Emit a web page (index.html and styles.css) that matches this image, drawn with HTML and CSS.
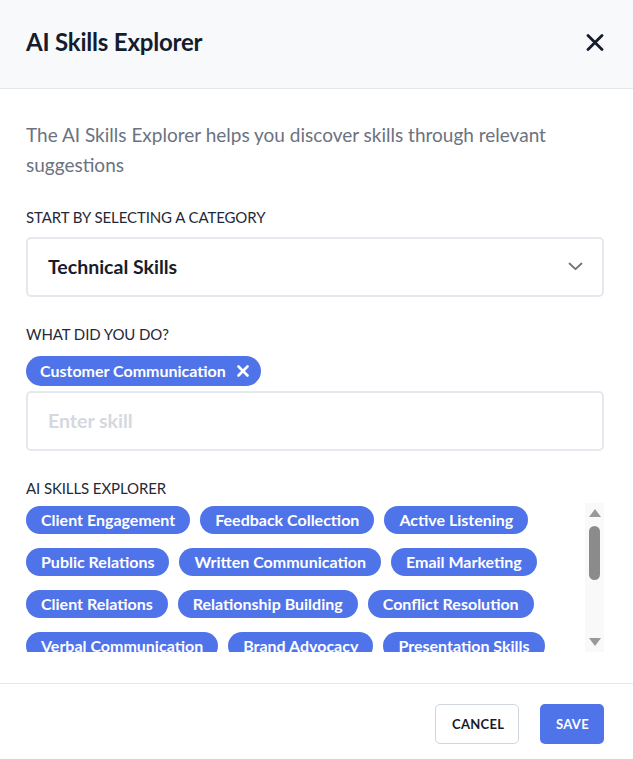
FILE: index.html
```html
<!DOCTYPE html>
<html lang="en">
<head>
<meta charset="utf-8">
<title>AI Skills Explorer</title>
<link rel="stylesheet" href="styles.css">
</head>
<body>
<div class="modal">
  <header class="modal-header">
    <h1 class="modal-title">AI Skills Explorer</h1>
    <button class="close-btn" aria-label="Close">
      <svg width="18" height="17" viewBox="0 0 18 17"><path d="M2 1.5 L16 15.5 M16 1.5 L2 15.5" stroke="#141b2d" stroke-width="2.8" stroke-linecap="round" fill="none"/></svg>
    </button>
  </header>
  <main class="modal-body">
    <p class="intro">The AI Skills Explorer helps you discover skills through relevant suggestions</p>

    <div class="label label-first">START BY SELECTING A CATEGORY</div>
    <div class="select">
      <span class="select-value">Technical Skills</span>
      <svg class="chevron" width="15" height="9" viewBox="0 0 15 9"><path d="M1.5 1.5 L7.5 7.2 L13.5 1.5" stroke="#6b7280" stroke-width="1.8" fill="none" stroke-linecap="round" stroke-linejoin="round"/></svg>
    </div>

    <div class="label">WHAT DID YOU DO?</div>
    <div class="selected-row">
      <span class="chip chip-selected">Customer Communication
        <svg class="chip-x" width="12" height="12" viewBox="0 0 12 12"><path d="M1.5 1.5 L10.5 10.5 M10.5 1.5 L1.5 10.5" stroke="#ffffff" stroke-width="2.6" stroke-linecap="round" fill="none"/></svg>
      </span>
    </div>
    <div class="input"><span class="placeholder">Enter skill</span></div>

    <div class="label">AI SKILLS EXPLORER</div>
    <div class="explorer">
      <div class="chip-list">
        <span class="chip">Client Engagement</span>
        <span class="chip">Feedback Collection</span>
        <span class="chip">Active Listening</span>
        <span class="chip">Public Relations</span>
        <span class="chip">Written Communication</span>
        <span class="chip">Email Marketing</span>
        <span class="chip">Client Relations</span>
        <span class="chip">Relationship Building</span>
        <span class="chip">Conflict Resolution</span>
        <span class="chip">Verbal Communication</span>
        <span class="chip">Brand Advocacy</span>
        <span class="chip">Presentation Skills</span>
        <span class="chip">Customer Support</span>
        <span class="chip">Negotiation</span>
        <span class="chip">Social Media</span>
      </div>
      <div class="scrollbar">
        <span class="arrow-up"></span>
        <span class="thumb"></span>
        <span class="track-space"></span>
        <span class="arrow-down"></span>
      </div>
    </div>
  </main>
  <footer class="modal-footer">
    <button class="btn btn-cancel">CANCEL</button>
    <button class="btn btn-save">SAVE</button>
  </footer>
</div>
</body>
</html>
```
FILE: styles.css
```css
* { box-sizing: border-box; }
html, body { margin: 0; padding: 0; background: #ffffff; }
body {
  font-family: "Lato", "Liberation Sans", sans-serif;
  color: #1f2937;
  width: 633px;
  height: 759px;
  overflow: hidden;
}
.modal { display: flex; flex-direction: column; height: 759px; }

.modal-header {
  height: 89px;
  background: #f8f9fb;
  border-bottom: 1px solid #e5e7eb;
  display: flex;
  align-items: center;
  justify-content: space-between;
  padding: 0 29px 6px 26px;
}
.modal-title {
  margin: 0;
  font-size: 24px;
  font-weight: 700;
  color: #151c2c;
  letter-spacing: -0.2px;
}
.close-btn {
  border: 0; background: none; padding: 0; margin: 0 0 -2px;
  display: flex; width: 18px; height: 17px;
}

.modal-body { padding: 31px 29px 0 26px; }
.intro {
  margin: 0;
  font-size: 19px;
  line-height: 30px;
  color: #6b7280;
  width: 560px;
}
.label {
  font-size: 15px;
  line-height: 20px;
  color: #1f2937;
  margin-top: 27px;
  letter-spacing: -0.1px;
}
.label-first { margin-top: 27px; }

.select {
  margin-top: 10px;
  height: 60px;
  border: 2px solid #e5e8ee;
  border-radius: 5px;
  display: flex;
  align-items: center;
  justify-content: space-between;
  padding: 0 19px 1px 20px;
}
.select-value { font-size: 19.5px; font-weight: 700; color: #161d2b; }
.chevron { display: block; }

.selected-row { margin-top: 12px; display: flex; }
.chip {
  display: inline-flex;
  align-items: center;
  height: 28px;
  padding: 0 15px 1px;
  border-radius: 14px;
  background: #4f73e9;
  color: #ffffff;
  font-size: 16px;
  font-weight: 700;
  white-space: nowrap;
}
.chip-selected { height: 30px; border-radius: 15px; padding: 0 12px 1px 14px; gap: 11px; }
.chip-x { display: block; }

.input {
  margin-top: 5px;
  height: 60px;
  border: 2px solid #e5e8ee;
  border-radius: 5px;
  display: flex;
  align-items: center;
  padding: 0 20px 1px;
}
.placeholder { font-size: 19.5px; font-weight: 700; color: #d5d8de; }

.explorer {
  margin-top: 5px;
  height: 149px;
  display: flex;
  gap: 10px;
}
.chip-list {
  flex: 1;
  overflow: hidden;
  display: flex;
  flex-wrap: wrap;
  align-content: flex-start;
  column-gap: 10px;
  row-gap: 14px;
  padding-top: 3px;
}
.scrollbar {
  width: 19px;
  flex: none;
  background: #f9f9f9;
  display: flex;
  flex-direction: column;
  align-items: center;
  padding: 6px 0 6px;
}
.arrow-up {
  width: 0; height: 0;
  border-left: 6px solid transparent;
  border-right: 6px solid transparent;
  border-bottom: 8px solid #999999;
}
.thumb {
  margin-top: 9px;
  width: 11px;
  height: 54px;
  border-radius: 6px;
  background: #8b8b8b;
}
.track-space { flex: 1; }
.arrow-down {
  width: 0; height: 0;
  border-left: 6px solid transparent;
  border-right: 6px solid transparent;
  border-top: 8px solid #999999;
}

.modal-footer {
  margin-top: 31px;
  border-top: 1px solid #e5e7eb;
  padding: 20px 29px 0 26px;
  display: flex;
  justify-content: flex-end;
  gap: 21px;
}
.btn {
  height: 40px;
  border-radius: 5px;
  font-family: "Lato", "Liberation Sans", sans-serif;
  font-size: 13px;
  font-weight: 700;
  letter-spacing: 0.3px;
  padding: 0 16px;
  cursor: pointer;
}
.btn-cancel { background: #ffffff; border: 1px solid #cfd6e0; color: #141b2b; width: 84px; }
.btn-save { background: #4f73e9; border: 0; color: #ffffff; width: 64px; }
```
